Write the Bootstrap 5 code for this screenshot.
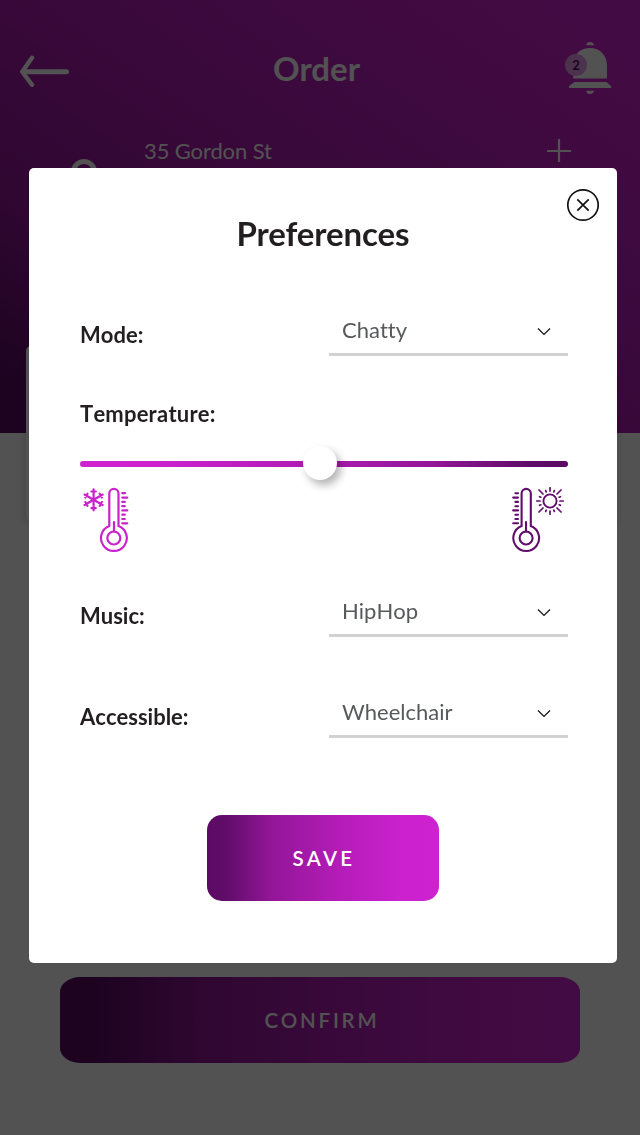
<!DOCTYPE html>
<html lang="en">
<head>
<meta charset="utf-8">
<meta name="viewport" content="width=device-width, initial-scale=1">
<title>Order – Preferences</title>
<link href="https://cdn.jsdelivr.net/npm/bootstrap@5.3.0/dist/css/bootstrap.min.css" rel="stylesheet">
<style>
:root{--stops:#5b0a63 0%,#600c69 8%,#931698 28%,#b31cb7 56%,#cb22ce 84%,#cd22cf 100%}
body{font-family:Lato,sans-serif;color:#231f20;background:#fff;height:1135px;overflow:hidden;font-variant-ligatures:none}
svg{display:block;flex:none}
.order-page{height:1135px;overflow:hidden}
.order-head{height:433px;background:linear-gradient(to top right,var(--stops));color:#fff}
.topbar{padding:41px 28px 0 20px;height:99px}
.topbar h1{font-size:33px;line-height:40px;margin:7px 6px 0 0}
.bell-count{left:-4px;top:13px;width:22px;height:22px;background:#eca0f0;color:#5b0a63;font-size:13px;font-weight:700;line-height:22px}
.trip-row{height:70px;padding:37px 68px 0 71px;font-size:22px;line-height:30px;letter-spacing:-.12px}
.pickup-dot{width:26px;height:26px;border:5px solid #fff;margin-top:23px}
.result-box{width:588px;height:175px;margin:-87px 0 0 26px;border-radius:5px;background:#fff;box-shadow:0 3px 12px rgba(0,0,0,.2)}
.grad-btn{background:linear-gradient(to right,var(--stops));color:#fff;border:0;height:86px;font-size:20.5px;font-weight:600;letter-spacing:3.3px;border-radius:15px}
.confirm-btn{width:520px;margin:456px 0 0 60px;padding-left:16px;border-radius:20px/15px;letter-spacing:2.8px}
.modal-backdrop{--bs-backdrop-opacity:.68}
.modal{overflow:hidden}
.modal-dialog{width:588px;max-width:none;margin:168px 0 0 29px}
.modal-content{height:795px;border:0;border-radius:5px;color:#231f20}
.modal-header{height:100px;padding:20px 17px 0;display:block}
.modal-title{font-size:33px;line-height:40px;margin-top:-9px;letter-spacing:-.1px}
.modal-body{padding:0 49px 0 51px;font-kerning:none}
.pref-row{height:56px}
.pref-label{font-size:22px;font-weight:700;line-height:30px}
.pref-row .pref-label{margin-bottom:6px}
.temp-label{letter-spacing:.2px}
.pref-select{width:239.500px;height:56px;padding:15px 17px 0 13.500px;border-bottom:3px solid #d2d2d2;color:#58595b;font-size:22px;line-height:30px}
.pref-select svg{margin-top:1px}
.temp-track{height:6px;border-radius:3px;background:linear-gradient(to left,var(--stops))}
.temp-thumb{width:34px;height:34px;top:-15px;background:#fff;box-shadow:4px 5px 8px rgba(0,0,0,.3)}
.save-btn{width:232px;padding-left:14px;font-kerning:auto}
</style>
</head>
<body>
<main class="order-page">
  <header class="order-head">
    <div class="topbar d-flex justify-content-between align-items-start">
      <svg width="50" height="34" style="margin-top:14px" viewBox="0 0 50 34" fill="none" stroke="#fff" stroke-linecap="round" stroke-linejoin="round"><path d="M4 16.700H46.500" stroke-width="5"/><path d="M12 2.800 2.200 16.700l9.800 13" stroke-width="4.400"/></svg>
      <h1 class="fw-bold">Order</h1>
      <div class="position-relative">
        <svg width="43" height="54" viewBox="0 0 43 54" fill="#fff"><path d="M17 4.200Q18 1 21 1t4.200 3.200ZM4.200 37.500V25C4.200 13 11 7 21 7s17 7 17 18v12.500ZM5.500 41H37.500l4.500 4q1 2-1 2H1q-1.500 0-1-2ZM17 49.800h8.200Q24 53 21 53t-4-3.200Z"/></svg>
        <span class="bell-count position-absolute rounded-circle text-center">2</span>
      </div>
    </div>
    <div class="trip-row d-flex align-items-start">
      <div class="pickup-dot rounded-circle"></div>
      <div class="flex-grow-1" style="padding-left:47px">35 Gordon St</div>
      <svg width="26" height="26" viewBox="0 0 26 26" fill="none" stroke="#fff" stroke-width="2.200"><path d="M13 3v24M1 15h24"/></svg>
    </div>
  </header>
  <div class="result-box"></div>
  <button class="btn grad-btn confirm-btn">CONFIRM</button>
</main>

<div class="modal-backdrop show"></div>
<div class="modal d-block" tabindex="-1" role="dialog" aria-labelledby="prefTitle">
  <div class="modal-dialog">
    <div class="modal-content">
      <div class="modal-header border-0">
        <button class="btn p-0 border-0 d-block ms-auto" aria-label="Close">
          <svg width="34" height="34" viewBox="0 0 34 34" fill="none" stroke="#111" stroke-width="1.700"><circle cx="17" cy="17" r="15.200"/><path d="m11.300 11.300 11.400 11.400m0-11.400L11.300 22.700"/></svg>
        </button>
        <h2 class="modal-title text-center fw-bold" id="prefTitle">Preferences</h2>
      </div>
      <div class="modal-body">
        <div class="pref-row d-flex justify-content-between align-items-end" style="margin-top:32px">
          <span class="pref-label">Mode:</span>
          <div class="pref-select d-flex justify-content-between"><span>Chatty</span><svg width="14" height="30" viewBox="0 0 14 30" fill="none" stroke="#111" stroke-width="1.200"><path d="m1 12.500 6 6 6-6"/></svg></div>
        </div>
        <div class="pref-label temp-label" style="margin-top:43px">Temperature:</div>
        <div class="temp-track position-relative" style="margin-top:32px"><span class="temp-thumb position-absolute rounded-circle" style="left:223px"></span></div>
        <div class="d-flex justify-content-between" style="margin-top:20px;padding:0 3px 0 2px">
          <svg width="48" height="66" viewBox="82 487 48 66" fill="none" stroke="#c922cc" stroke-width="2.200" stroke-linecap="round"><path d="M109.300 526V493.500a4.600 4.600 0 0 1 9.200 0V526A12.900 12.900 0 1 1 109.300 526ZM114 522v9.500"/><circle cx="113.800" cy="538" r="6.500"/><path d="M122.300 493.200h2.700M122.300 497.600h5M122.300 501.900h2.500M122.300 506.200h2.500M122.300 510.400h5M122.300 514.700h2.500M122.300 519h2.500M122.300 523.300h5"/><g><path id="arm" d="M93.600 499.800V489.300M91.400 491.500h4.400" /><use href="#arm" transform="rotate(60 93.600 499.800)"/><use href="#arm" transform="rotate(120 93.600 499.800)"/><use href="#arm" transform="rotate(180 93.600 499.800)"/><use href="#arm" transform="rotate(240 93.600 499.800)"/><use href="#arm" transform="rotate(300 93.600 499.800)"/></g></svg>
          <svg width="54" height="66" viewBox="511 487 54 66" fill="none" stroke="#610d6b" stroke-width="2.100" stroke-linecap="round"><path d="M521.600 526V493.500a4.600 4.600 0 0 1 9.200 0V526A12.900 12.900 0 1 1 521.600 526ZM526 522v9.500"/><circle cx="526.100" cy="538" r="6.500"/><path d="M515.400 493.200h2.600M513.200 497.600h4.800M515.400 501.900h2.600M515.400 506.200h2.600M513.200 510.400h4.800M515.400 514.700h2.600M515.400 519h2.600M513.200 523.300h4.800"/><circle cx="550" cy="501" r="6.600" stroke-width="1.900"/><path stroke-width="1.700" d="M550 491v-3.200M550 511v3.200M540 501h-3.200M560 501h3.200M543 494l-4-4M557 494l4-4M543 508l-4 4M557 508l4 4M546.200 491.800l-.5-1.200M553.800 491.800l.5-1.200M546.200 510.200l-.5 1.200M553.800 510.200l.5 1.200M540.800 497.200l-1.200-.5M559.200 497.200l1.200-.5M540.800 504.800l-1.200.5M559.200 504.800l1.200.5"/></svg>
        </div>
        <div class="pref-row d-flex justify-content-between align-items-end" style="margin-top:28px">
          <span class="pref-label">Music:</span>
          <div class="pref-select d-flex justify-content-between"><span>HipHop</span><svg width="14" height="30" viewBox="0 0 14 30" fill="none" stroke="#111" stroke-width="1.200"><path d="m1 12.500 6 6 6-6"/></svg></div>
        </div>
        <div class="pref-row d-flex justify-content-between align-items-end" style="margin-top:45px">
          <span class="pref-label">Accessible:</span>
          <div class="pref-select d-flex justify-content-between"><span>Wheelchair</span><svg width="14" height="30" viewBox="0 0 14 30" fill="none" stroke="#111" stroke-width="1.200"><path d="m1 12.500 6 6 6-6"/></svg></div>
        </div>
        <div class="text-center" style="margin:77px 2px 0 0"><button class="btn grad-btn save-btn">SAVE</button></div>
      </div>
    </div>
  </div>
</div>
<script src="https://cdn.jsdelivr.net/npm/bootstrap@5.3.0/dist/js/bootstrap.bundle.min.js"></script>
</body>
</html>
